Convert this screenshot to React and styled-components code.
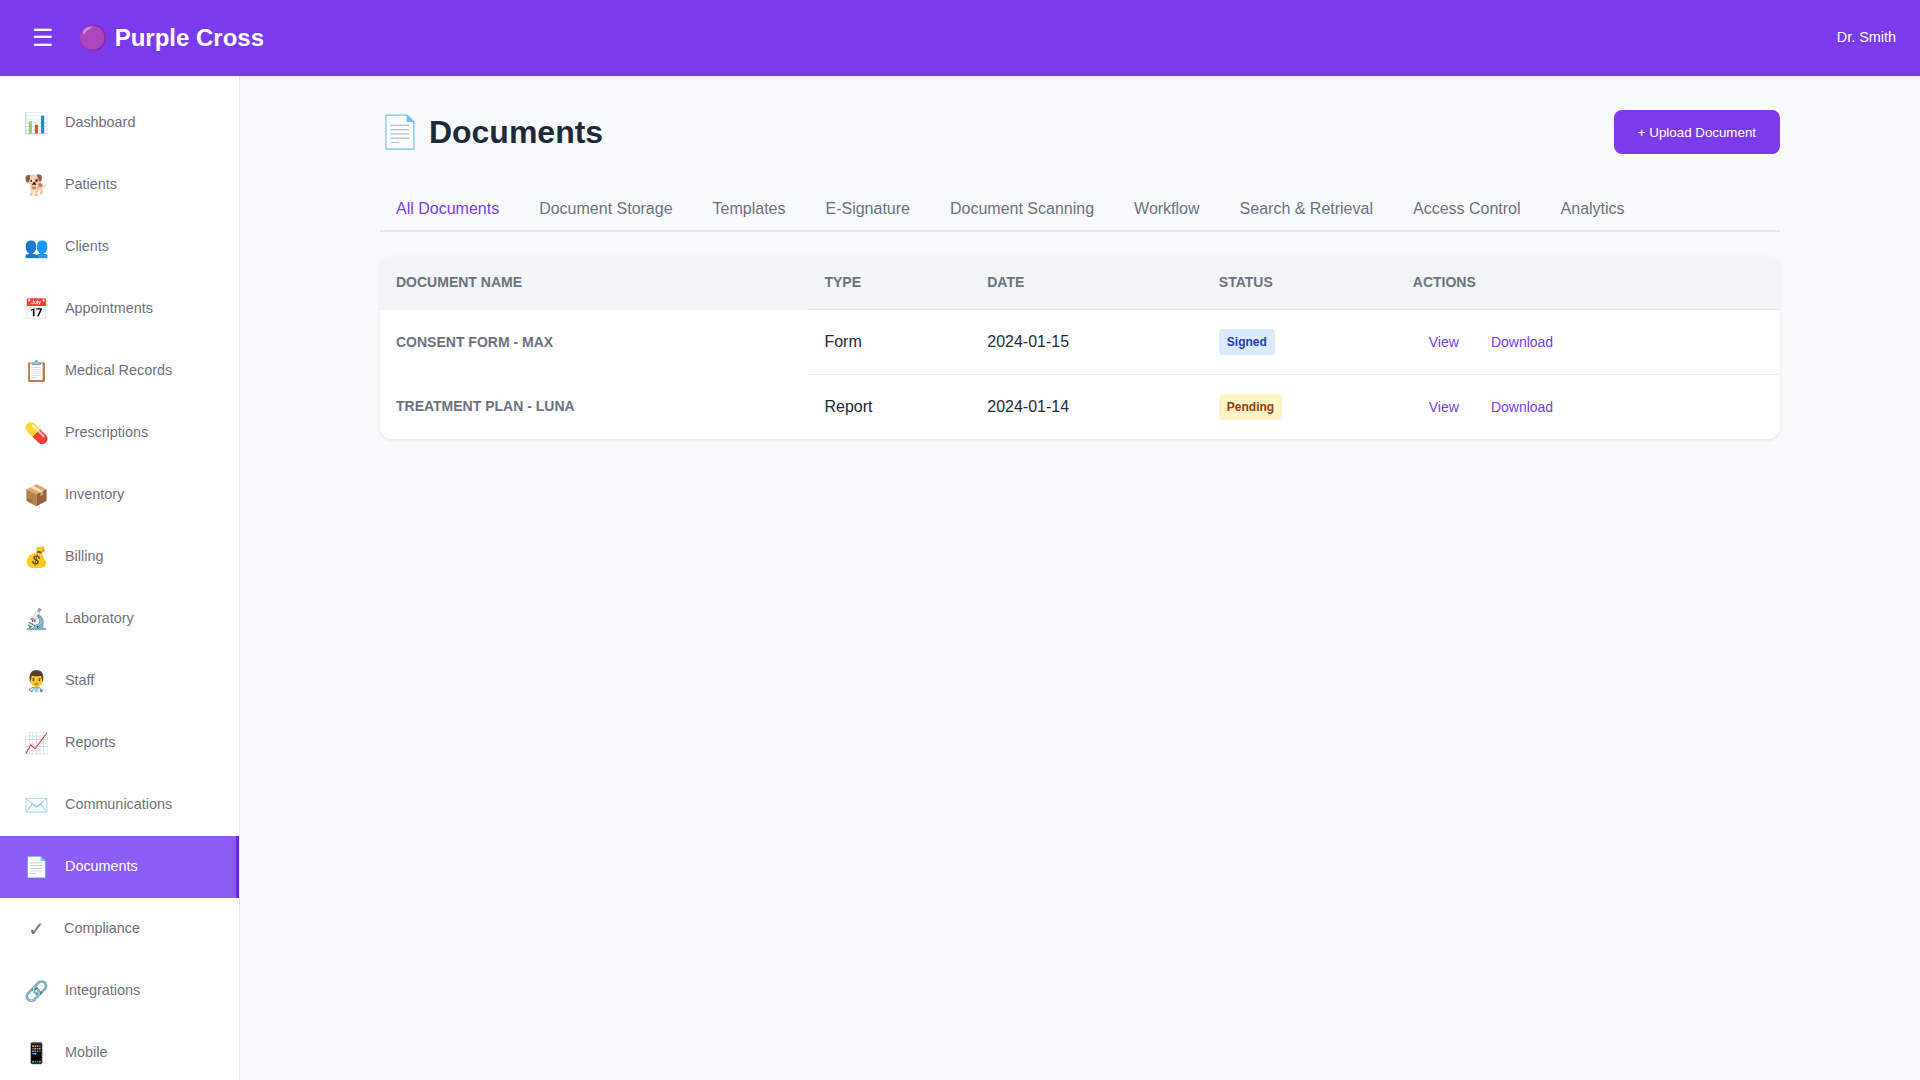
import React from 'react';
import styled, { createGlobalStyle } from 'styled-components';

const GlobalStyle = createGlobalStyle`
  * {
    box-sizing: border-box;
  }

  html,
  body {
    margin: 0;
    padding: 0;
    background: #f9fafb;
  }

  body {
    font-family: 'Liberation Sans', Arial, sans-serif;
    font-size: 16px;
    line-height: 1.5;
    color: #1f2937;
  }
`;

const Shell = styled.div`
  display: flex;
  flex-direction: column;
  min-height: 100vh;
`;

const Header = styled.header`
  flex: none;
  height: 76px;
  padding: 0 24px;
  display: flex;
  align-items: center;
  justify-content: space-between;
  background: #7c3aed;
  color: #fff;
  box-shadow: 0 1px 3px rgba(0, 0, 0, 0.1);
  position: relative;
  z-index: 2;
`;

const HeaderLeft = styled.div`
  display: flex;
  align-items: center;
  gap: 16px;
`;

const MenuButton = styled.button`
  padding: 8px;
  border: none;
  background: transparent;
  color: #fff;
  font-family: inherit;
  font-size: 24px;
  cursor: pointer;
`;

const Logo = styled.div`
  font-size: 24px;
  font-weight: 700;
`;

const UserName = styled.div`
  font-size: 14.4px;
`;

const Body = styled.div`
  flex: 1;
  display: flex;
`;

const Sidebar = styled.nav`
  flex: none;
  width: 240px;
  padding: 16px 0;
  background: #fff;
  border-right: 1px solid #e5e7eb;
`;

const NavItem = styled.a`
  display: flex;
  align-items: center;
  gap: 16px;
  padding: 16px 24px;
  font-size: 14.4px;
  text-decoration: none;
  cursor: pointer;
  color: ${(p) => (p.$active ? '#fff' : '#6b7280')};
  background: ${(p) => (p.$active ? '#8b5cf6' : 'transparent')};
  border-right: ${(p) => (p.$active ? '3px solid #6d28d9' : 'none')};
`;

const NavIcon = styled.span`
  min-width: 24px;
  font-size: 20px;
  text-align: center;
`;

const Main = styled.main`
  flex: 1;
  min-width: 0;
  padding: 32px 24px;
`;

const Page = styled.div`
  max-width: 1400px;
  margin: 0 auto;
`;

const PageHeader = styled.div`
  display: flex;
  align-items: center;
  justify-content: space-between;
  margin-bottom: 32px;
`;

const Title = styled.h1`
  margin: 0;
  font-size: 32px;
  font-weight: 700;
  color: #1f2937;
`;

const UploadButton = styled.button`
  padding: 14.5px 24px;
  border: none;
  border-radius: 8px;
  background: #7c3aed;
  color: #fff;
  font-family: inherit;
  font-size: 13.33px;
  cursor: pointer;
`;

const Tabs = styled.div`
  display: flex;
  gap: 8px;
  margin-bottom: 24px;
  border-bottom: 2px solid #e5e7eb;
`;

const Tab = styled.button`
  padding: 12px 16px;
  border: none;
  background: transparent;
  font-family: inherit;
  font-size: 16px;
  cursor: pointer;
  color: ${(p) => (p.$active ? '#7c3aed' : '#6b7280')};
`;

const Card = styled.div`
  background: #fff;
  border-radius: 12px;
  box-shadow: 0 1px 3px rgba(0, 0, 0, 0.1);
  overflow: hidden;
`;

const Table = styled.table`
  width: 100%;
  border-collapse: collapse;
`;

const HeadCell = styled.th`
  padding: 16px;
  text-align: left;
  font-size: 14px;
  font-weight: 700;
  text-transform: uppercase;
  color: #6b7280;
  background: #f3f4f6;
  border-bottom: ${(p) => (p.$plain ? 'none' : '1px solid #e5e7eb')};
`;

const RowHead = styled.th`
  padding: 16px;
  text-align: left;
  font-size: 14px;
  font-weight: 700;
  text-transform: uppercase;
  color: #6b7280;
  background: #fff;
`;

const Cell = styled.td`
  padding: 16px;
  font-size: 16px;
  color: #1f2937;
  border-bottom: ${(p) => (p.$last ? 'none' : '1px solid #e5e7eb')};
`;

const Badge = styled.span`
  display: inline-block;
  padding: 4px 8px;
  border-radius: 4px;
  font-size: 12px;
  font-weight: 700;
  color: ${(p) => (p.$tone === 'signed' ? '#1e40af' : '#92400e')};
  background: ${(p) => (p.$tone === 'signed' ? '#dbeafe' : '#fef3c7')};
`;

const ActionButton = styled.button`
  padding: 8px 16px;
  border: none;
  background: transparent;
  color: #7c3aed;
  font-family: inherit;
  font-size: 14px;
  cursor: pointer;
`;

const navItems = [
  ['📊', 'Dashboard'],
  ['🐕', 'Patients'],
  ['👥', 'Clients'],
  ['📅', 'Appointments'],
  ['📋', 'Medical Records'],
  ['💊', 'Prescriptions'],
  ['📦', 'Inventory'],
  ['💰', 'Billing'],
  ['🔬', 'Laboratory'],
  ['👨‍⚕️', 'Staff'],
  ['📈', 'Reports'],
  ['✉️', 'Communications'],
  ['📄', 'Documents'],
  ['✓', 'Compliance'],
  ['🔗', 'Integrations'],
  ['📱', 'Mobile'],
];

const tabs = [
  'All Documents',
  'Document Storage',
  'Templates',
  'E-Signature',
  'Document Scanning',
  'Workflow',
  'Search & Retrieval',
  'Access Control',
  'Analytics',
];

const documents = [
  { name: 'Consent Form - Max', type: 'Form', date: '2024-01-15', status: 'Signed' },
  { name: 'Treatment Plan - Luna', type: 'Report', date: '2024-01-14', status: 'Pending' },
];

const App = () => {
  return (
    <Shell>
      <GlobalStyle />
      <Header>
        <HeaderLeft>
          <MenuButton>☰</MenuButton>
          <Logo>🟣 Purple Cross</Logo>
        </HeaderLeft>
        <UserName>Dr. Smith</UserName>
      </Header>
      <Body>
        <Sidebar>
          {navItems.map(([icon, label]) => (
            <NavItem key={label} $active={label === 'Documents'}>
              <NavIcon>{icon}</NavIcon>
              <span>{label}</span>
            </NavItem>
          ))}
        </Sidebar>
        <Main>
          <Page>
            <PageHeader>
              <Title>📄 Documents</Title>
              <UploadButton>+ Upload Document</UploadButton>
            </PageHeader>
            <Tabs>
              {tabs.map((tab, index) => (
                <Tab key={tab} $active={index === 0}>
                  {tab}
                </Tab>
              ))}
            </Tabs>
            <Card>
              <Table>
                <thead>
                  <tr>
                    <HeadCell $plain>Document Name</HeadCell>
                    <HeadCell>Type</HeadCell>
                    <HeadCell>Date</HeadCell>
                    <HeadCell>Status</HeadCell>
                    <HeadCell>Actions</HeadCell>
                  </tr>
                </thead>
                <tbody>
                  {documents.map((doc, index) => {
                    const last = index === documents.length - 1;
                    return (
                      <tr key={doc.name}>
                        <RowHead>{doc.name}</RowHead>
                        <Cell $last={last}>{doc.type}</Cell>
                        <Cell $last={last}>{doc.date}</Cell>
                        <Cell $last={last}>
                          <Badge $tone={doc.status.toLowerCase()}>{doc.status}</Badge>
                        </Cell>
                        <Cell $last={last}>
                          <ActionButton>View</ActionButton>
                          <ActionButton>Download</ActionButton>
                        </Cell>
                      </tr>
                    );
                  })}
                </tbody>
              </Table>
            </Card>
          </Page>
        </Main>
      </Body>
    </Shell>
  );
};

export default App;
